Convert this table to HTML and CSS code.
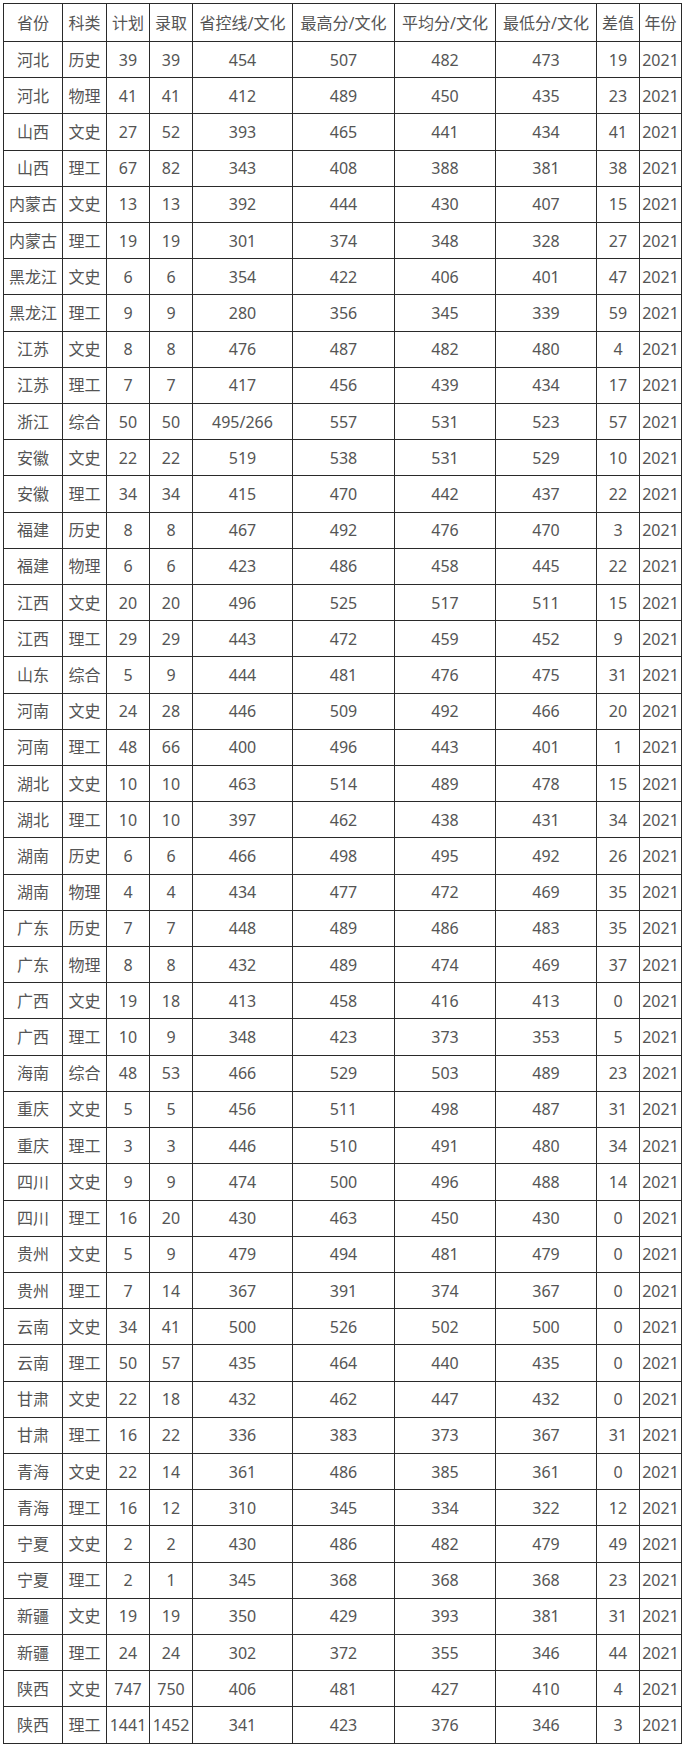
FILE: index.html
```html
<!DOCTYPE html>
<html lang="zh">
<head>
<meta charset="utf-8">
<title>录取分数</title>
<link rel="stylesheet" href="styles.css">
</head>
<body>
<table class="score-table">
<colgroup>
<col class="c-prov"><col class="c-type"><col class="c-num"><col class="c-num"><col class="c-line"><col class="c-max"><col class="c-avg"><col class="c-min"><col class="c-num"><col class="c-year">
</colgroup>
<thead>
<tr class="head"><th>省份</th><th>科类</th><th>计划</th><th>录取</th><th>省控线/文化</th><th>最高分/文化</th><th>平均分/文化</th><th>最低分/文化</th><th>差值</th><th>年份</th></tr>
</thead>
<tbody>
<tr><td>河北</td><td>历史</td><td>39</td><td>39</td><td>454</td><td>507</td><td>482</td><td>473</td><td>19</td><td>2021</td></tr>
<tr><td>河北</td><td>物理</td><td>41</td><td>41</td><td>412</td><td>489</td><td>450</td><td>435</td><td>23</td><td>2021</td></tr>
<tr><td>山西</td><td>文史</td><td>27</td><td>52</td><td>393</td><td>465</td><td>441</td><td>434</td><td>41</td><td>2021</td></tr>
<tr><td>山西</td><td>理工</td><td>67</td><td>82</td><td>343</td><td>408</td><td>388</td><td>381</td><td>38</td><td>2021</td></tr>
<tr><td>内蒙古</td><td>文史</td><td>13</td><td>13</td><td>392</td><td>444</td><td>430</td><td>407</td><td>15</td><td>2021</td></tr>
<tr><td>内蒙古</td><td>理工</td><td>19</td><td>19</td><td>301</td><td>374</td><td>348</td><td>328</td><td>27</td><td>2021</td></tr>
<tr><td>黑龙江</td><td>文史</td><td>6</td><td>6</td><td>354</td><td>422</td><td>406</td><td>401</td><td>47</td><td>2021</td></tr>
<tr><td>黑龙江</td><td>理工</td><td>9</td><td>9</td><td>280</td><td>356</td><td>345</td><td>339</td><td>59</td><td>2021</td></tr>
<tr><td>江苏</td><td>文史</td><td>8</td><td>8</td><td>476</td><td>487</td><td>482</td><td>480</td><td>4</td><td>2021</td></tr>
<tr><td>江苏</td><td>理工</td><td>7</td><td>7</td><td>417</td><td>456</td><td>439</td><td>434</td><td>17</td><td>2021</td></tr>
<tr><td>浙江</td><td>综合</td><td>50</td><td>50</td><td>495/266</td><td>557</td><td>531</td><td>523</td><td>57</td><td>2021</td></tr>
<tr><td>安徽</td><td>文史</td><td>22</td><td>22</td><td>519</td><td>538</td><td>531</td><td>529</td><td>10</td><td>2021</td></tr>
<tr><td>安徽</td><td>理工</td><td>34</td><td>34</td><td>415</td><td>470</td><td>442</td><td>437</td><td>22</td><td>2021</td></tr>
<tr><td>福建</td><td>历史</td><td>8</td><td>8</td><td>467</td><td>492</td><td>476</td><td>470</td><td>3</td><td>2021</td></tr>
<tr><td>福建</td><td>物理</td><td>6</td><td>6</td><td>423</td><td>486</td><td>458</td><td>445</td><td>22</td><td>2021</td></tr>
<tr><td>江西</td><td>文史</td><td>20</td><td>20</td><td>496</td><td>525</td><td>517</td><td>511</td><td>15</td><td>2021</td></tr>
<tr><td>江西</td><td>理工</td><td>29</td><td>29</td><td>443</td><td>472</td><td>459</td><td>452</td><td>9</td><td>2021</td></tr>
<tr><td>山东</td><td>综合</td><td>5</td><td>9</td><td>444</td><td>481</td><td>476</td><td>475</td><td>31</td><td>2021</td></tr>
<tr><td>河南</td><td>文史</td><td>24</td><td>28</td><td>446</td><td>509</td><td>492</td><td>466</td><td>20</td><td>2021</td></tr>
<tr><td>河南</td><td>理工</td><td>48</td><td>66</td><td>400</td><td>496</td><td>443</td><td>401</td><td>1</td><td>2021</td></tr>
<tr><td>湖北</td><td>文史</td><td>10</td><td>10</td><td>463</td><td>514</td><td>489</td><td>478</td><td>15</td><td>2021</td></tr>
<tr><td>湖北</td><td>理工</td><td>10</td><td>10</td><td>397</td><td>462</td><td>438</td><td>431</td><td>34</td><td>2021</td></tr>
<tr><td>湖南</td><td>历史</td><td>6</td><td>6</td><td>466</td><td>498</td><td>495</td><td>492</td><td>26</td><td>2021</td></tr>
<tr><td>湖南</td><td>物理</td><td>4</td><td>4</td><td>434</td><td>477</td><td>472</td><td>469</td><td>35</td><td>2021</td></tr>
<tr><td>广东</td><td>历史</td><td>7</td><td>7</td><td>448</td><td>489</td><td>486</td><td>483</td><td>35</td><td>2021</td></tr>
<tr><td>广东</td><td>物理</td><td>8</td><td>8</td><td>432</td><td>489</td><td>474</td><td>469</td><td>37</td><td>2021</td></tr>
<tr><td>广西</td><td>文史</td><td>19</td><td>18</td><td>413</td><td>458</td><td>416</td><td>413</td><td>0</td><td>2021</td></tr>
<tr><td>广西</td><td>理工</td><td>10</td><td>9</td><td>348</td><td>423</td><td>373</td><td>353</td><td>5</td><td>2021</td></tr>
<tr><td>海南</td><td>综合</td><td>48</td><td>53</td><td>466</td><td>529</td><td>503</td><td>489</td><td>23</td><td>2021</td></tr>
<tr><td>重庆</td><td>文史</td><td>5</td><td>5</td><td>456</td><td>511</td><td>498</td><td>487</td><td>31</td><td>2021</td></tr>
<tr><td>重庆</td><td>理工</td><td>3</td><td>3</td><td>446</td><td>510</td><td>491</td><td>480</td><td>34</td><td>2021</td></tr>
<tr><td>四川</td><td>文史</td><td>9</td><td>9</td><td>474</td><td>500</td><td>496</td><td>488</td><td>14</td><td>2021</td></tr>
<tr><td>四川</td><td>理工</td><td>16</td><td>20</td><td>430</td><td>463</td><td>450</td><td>430</td><td>0</td><td>2021</td></tr>
<tr><td>贵州</td><td>文史</td><td>5</td><td>9</td><td>479</td><td>494</td><td>481</td><td>479</td><td>0</td><td>2021</td></tr>
<tr><td>贵州</td><td>理工</td><td>7</td><td>14</td><td>367</td><td>391</td><td>374</td><td>367</td><td>0</td><td>2021</td></tr>
<tr><td>云南</td><td>文史</td><td>34</td><td>41</td><td>500</td><td>526</td><td>502</td><td>500</td><td>0</td><td>2021</td></tr>
<tr><td>云南</td><td>理工</td><td>50</td><td>57</td><td>435</td><td>464</td><td>440</td><td>435</td><td>0</td><td>2021</td></tr>
<tr><td>甘肃</td><td>文史</td><td>22</td><td>18</td><td>432</td><td>462</td><td>447</td><td>432</td><td>0</td><td>2021</td></tr>
<tr><td>甘肃</td><td>理工</td><td>16</td><td>22</td><td>336</td><td>383</td><td>373</td><td>367</td><td>31</td><td>2021</td></tr>
<tr><td>青海</td><td>文史</td><td>22</td><td>14</td><td>361</td><td>486</td><td>385</td><td>361</td><td>0</td><td>2021</td></tr>
<tr><td>青海</td><td>理工</td><td>16</td><td>12</td><td>310</td><td>345</td><td>334</td><td>322</td><td>12</td><td>2021</td></tr>
<tr><td>宁夏</td><td>文史</td><td>2</td><td>2</td><td>430</td><td>486</td><td>482</td><td>479</td><td>49</td><td>2021</td></tr>
<tr><td>宁夏</td><td>理工</td><td>2</td><td>1</td><td>345</td><td>368</td><td>368</td><td>368</td><td>23</td><td>2021</td></tr>
<tr><td>新疆</td><td>文史</td><td>19</td><td>19</td><td>350</td><td>429</td><td>393</td><td>381</td><td>31</td><td>2021</td></tr>
<tr><td>新疆</td><td>理工</td><td>24</td><td>24</td><td>302</td><td>372</td><td>355</td><td>346</td><td>44</td><td>2021</td></tr>
<tr><td>陕西</td><td>文史</td><td>747</td><td>750</td><td>406</td><td>481</td><td>427</td><td>410</td><td>4</td><td>2021</td></tr>
<tr><td>陕西</td><td>理工</td><td>1441</td><td>1452</td><td>341</td><td>423</td><td>376</td><td>346</td><td>3</td><td>2021</td></tr>
</tbody>
</table>
</body>
</html>
```
FILE: styles.css
```css
html, body {
  margin: 0;
  padding: 0;
  background: #ffffff;
}

body {
  padding: 3px 0 0 3px;
  font-family: "Noto Sans", "Noto Sans CJK SC", sans-serif;
  font-size: 16px;
  color: #555555;
}

.score-table {
  border-collapse: collapse;
  table-layout: fixed;
  width: 679px;
}

.c-prov { width: 59px; }
.c-type { width: 44px; }
.c-num { width: 43px; }
.c-line { width: 100px; }
.c-max { width: 102px; }
.c-avg { width: 101px; }
.c-min { width: 101px; }
.c-year { width: 42px; }

.score-table th,
.score-table td {
  border: 1px solid #2a2a2a;
  padding: 0;
  text-align: center;
  vertical-align: middle;
  font-weight: normal;
  line-height: 20px;
  white-space: nowrap;
  overflow: hidden;
}

.score-table tr.head {
  height: 38px;
}

.score-table tbody tr {
  height: 36.21px;
}
```
